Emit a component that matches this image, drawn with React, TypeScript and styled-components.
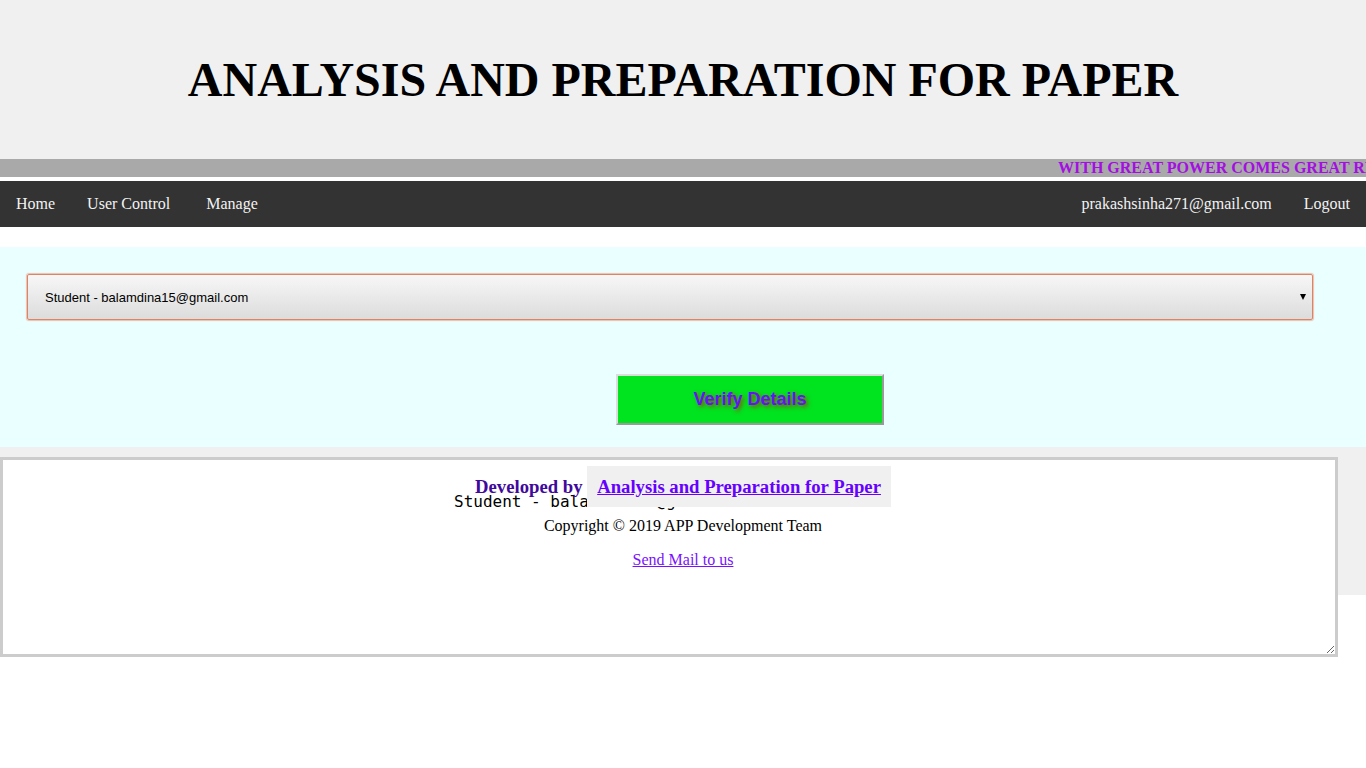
import React from "react";
import styled, { createGlobalStyle } from "styled-components";

const Global = createGlobalStyle`
  html, body { margin: 0; padding: 0; background: #ffffff; }
  body { font-family: "Liberation Serif", "Times New Roman", serif; font-size: 16px; color: #000; }
`;

const Header = styled.header`
  height: 159px;
  background: #f0f0f0;
  display: flex;
  align-items: center;
  justify-content: center;
`;

const Title = styled.h1`
  margin: 0;
  font-family: "Liberation Serif", serif;
  font-weight: bold;
  font-size: 48px;
  color: #000;
`;

const MarqueeBar = styled.div`
  height: 18px;
  background: #a9a9a9;
  margin-bottom: 4px;
`;

const MarqueeTrack = styled.div`
  display: inline-block;
  white-space: nowrap;
  margin-left: 1058px;
  font-family: "Liberation Serif", serif;
  font-weight: bold;
  font-size: 16px;
  line-height: 18px;
  color: #a40fe2;
`;

const Nav = styled.nav`
  height: 46px;
  background: #333333;
  display: flex;
  align-items: center;
`;

const NavLink = styled.a<{ $push?: boolean }>`
  color: #f2f2f2;
  text-decoration: none;
  font-size: 16px;
  padding: 0 16px;
  white-space: pre;
  margin-left: ${(p) => (p.$push ? "auto" : "0")};
`;

const Panel = styled.section`
  margin-top: 20px;
  height: 200px;
  background: #eaffff;
  padding-top: 27px;
  box-sizing: border-box;
`;

const SelectWrap = styled.div`
  position: relative;
  margin-left: 27px;
  width: 1286px;

  &::after {
    content: "";
    position: absolute;
    right: 7px;
    top: 20px;
    width: 0;
    height: 0;
    border-left: 3px solid transparent;
    border-right: 3px solid transparent;
    border-top: 6px solid #000;
    pointer-events: none;
  }
`;

const Select = styled.select`
  display: block;
  appearance: none;
  -webkit-appearance: none;
  width: 100%;
  height: 46px;
  padding: 0 13px 0 17px;
  border: 1px solid #dc8466;
  box-shadow: 0 0 1px 1px rgba(236, 150, 120, 0.6);
  border-radius: 2px;
  background: linear-gradient(#f7f7f7, #dcdcdc);
  font-family: "Liberation Sans", Arial, sans-serif;
  font-size: 13px;
  color: #000;
  outline: none;
`;

const VerifyButton = styled.button`
  display: block;
  margin: 54px 0 0 616px;
  width: 268px;
  height: 51px;
  background: #00e31f;
  border-style: solid;
  border-width: 2px;
  border-color: #dcdcdc #9a9a9a #9a9a9a #dcdcdc;
  font-family: "Liberation Sans", Arial, sans-serif;
  font-weight: bold;
  font-size: 18px;
  color: #6512f6;
  text-shadow: 2px 2px 4px #8b4a10;
  padding: 0;
`;

const FooterArea = styled.footer`
  display: grid;
  grid-template-columns: 100%;
`;

const FooterBg = styled.div`
  grid-area: 1 / 1;
  align-self: start;
  height: 148px;
  background: #f0f0f0;
`;

const Notes = styled.textarea`
  grid-area: 1 / 1;
  align-self: start;
  justify-self: start;
  margin: 10px 0 0 0;
  width: 1338px;
  height: 200px;
  box-sizing: border-box;
  border: 3px solid #cccccc;
  background: #ffffff;
  padding: 32px 2px 2px 2px;
  text-indent: 449px;
  font-family: "DejaVu Sans Mono", monospace;
  font-size: 16px;
  line-height: 19px;
  color: #000;
  outline: none;
`;

const FooterContent = styled.div`
  grid-area: 1 / 1;
  align-self: start;
  padding-top: 29px;
  text-align: center;
`;

const DevLine = styled.div`
  font-size: 18.7px;
  line-height: 22px;
  font-weight: bold;
  color: #3f0a9c;
`;

const BrandLink = styled.a`
  background: #f0f0f0;
  padding: 10px;
  color: #6600ff;
  text-decoration: underline;
`;

const Copyright = styled.p`
  margin: 19px 0 0;
  font-size: 16px;
  line-height: 18px;
`;

const MailLink = styled.a`
  display: inline-block;
  margin-top: 16px;
  font-size: 16px;
  line-height: 18px;
  color: #7a10ff;
  text-decoration: underline;
`;

export default function App() {
  return (
    <>
      <Global />
      <Header>
        <Title>ANALYSIS AND PREPARATION FOR PAPER</Title>
      </Header>
      <MarqueeBar>
        <MarqueeTrack>WITH GREAT POWER COMES GREAT RESPONSIBILITY</MarqueeTrack>
      </MarqueeBar>
      <Nav>
        <NavLink href="#">Home</NavLink>
        <NavLink href="#">{"User Control\u00a0"}</NavLink>
        <NavLink href="#">Manage</NavLink>
        <NavLink href="#" $push>prakashsinha271@gmail.com</NavLink>
        <NavLink href="#">Logout</NavLink>
      </Nav>
      <Panel>
        <SelectWrap>
          <Select defaultValue="balamdina15@gmail.com">
            <option value="balamdina15@gmail.com">Student - balamdina15@gmail.com</option>
          </Select>
        </SelectWrap>
        <VerifyButton type="button">Verify Details</VerifyButton>
      </Panel>
      <FooterArea>
        <FooterBg />
        <Notes defaultValue="Student - balamdina15@gmail.com" readOnly />
        <FooterContent>
          <DevLine>
            Developed by <BrandLink href="#">Analysis and Preparation for Paper</BrandLink>
          </DevLine>
          <Copyright>Copyright © 2019 APP Development Team</Copyright>
          <MailLink href="#">Send Mail to us</MailLink>
        </FooterContent>
      </FooterArea>
    </>
  );
}
